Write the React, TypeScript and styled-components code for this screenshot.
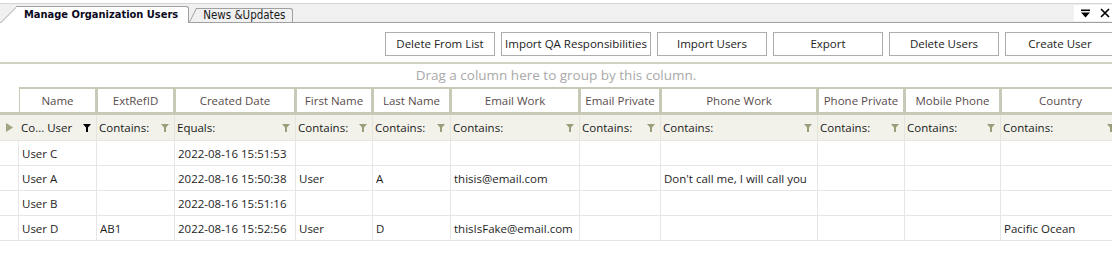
import styled, { createGlobalStyle } from "styled-components";

const GlobalStyle = createGlobalStyle`
  html, body {
    margin: 0;
    padding: 0;
    background: #fff;
  }
  body {
    font-family: "Open Sans", "Noto Sans", sans-serif;
    overflow: hidden;
  }
`;

const GRID = "19px 78px 78px 121px 77px 78px 129px 81px 157px 87px 96px 120px";

type Column = { title: string; filter: string; active?: boolean };

const columns: Column[] = [
  { title: "Name", filter: "Co... User", active: true },
  { title: "ExtRefID", filter: "Contains:" },
  { title: "Created Date", filter: "Equals:" },
  { title: "First Name", filter: "Contains:" },
  { title: "Last Name", filter: "Contains:" },
  { title: "Email Work", filter: "Contains:" },
  { title: "Email Private", filter: "Contains:" },
  { title: "Phone Work", filter: "Contains:" },
  { title: "Phone Private", filter: "Contains:" },
  { title: "Mobile Phone", filter: "Contains:" },
  { title: "Country", filter: "Contains:" },
];

const rows: string[][] = [
  ["User C", "", "2022-08-16 15:51:53", "", "", "", "", "", "", "", ""],
  ["User A", "", "2022-08-16 15:50:38", "User", "A", "thisis@email.com", "", "Don't call me, I will call you", "", "", ""],
  ["User B", "", "2022-08-16 15:51:16", "", "", "", "", "", "", "", ""],
  ["User D", "AB1", "2022-08-16 15:52:56", "User", "D", "thisIsFake@email.com", "", "", "", "", "Pacific Ocean"],
];

const buttons = [
  { label: "Delete From List", w: 110 },
  { label: "Import QA Responsibilities", w: 150 },
  { label: "Import Users", w: 110 },
  { label: "Export", w: 110 },
  { label: "Delete Users", w: 110 },
  { label: "Create User", w: 110 },
];

export default function App() {
  return (
    <Page>
      <GlobalStyle />
      <TabStrip>
        <Tab $active>Manage Organization Users</Tab>
        <Tab>News &amp;Updates</Tab>
        <WindowControls>
          <svg width="9" height="9" viewBox="0 0 9 9">
            <rect x="0" y="0.5" width="9" height="1.6" fill="#000" />
            <polygon points="0,3.5 9,3.5 4.5,8.5" fill="#000" />
          </svg>
          <svg width="10" height="10" viewBox="0 0 10 10">
            <path d="M1 1 L9 9 M9 1 L1 9" stroke="#000" strokeWidth="1.7" />
          </svg>
        </WindowControls>
      </TabStrip>

      <Toolbar>
        {buttons.map((b) => (
          <Button key={b.label} $w={b.w}>
            {b.label}
          </Button>
        ))}
      </Toolbar>

      <GroupPanel>Drag a column here to group by this column.</GroupPanel>

      <Grid>
        <HeaderRow>
          <CornerCell />
          {columns.map((c) => (
            <HeaderCell key={c.title}>{c.title}</HeaderCell>
          ))}
        </HeaderRow>

        <FilterRow>
          <FilterIndicator>
            <svg width="7" height="9" viewBox="0 0 7 9">
              <polygon points="0,0 7,4.5 0,9" fill="#a3a383" />
            </svg>
          </FilterIndicator>
          {columns.map((c) => (
            <FilterCell key={c.title}>
              <span>{c.filter}</span>
              <FunnelIcon color={c.active ? "#000" : "#9d9d7b"} />
            </FilterCell>
          ))}
        </FilterRow>

        {rows.map((r, i) => (
          <DataRow key={i}>
            <DataCell />
            {r.map((v, j) => (
              <DataCell key={j}>{v}</DataCell>
            ))}
          </DataRow>
        ))}
      </Grid>
    </Page>
  );
}

function FunnelIcon({ color }: { color: string }) {
  return (
    <svg width="8" height="8" viewBox="0 0 8 8">
      <polygon points="0,0 8,0 5,3.5 5,8 3,8 3,3.5" fill={color} />
    </svg>
  );
}

const Page = styled.div`
  width: 1112px;
  height: 254px;
  overflow: hidden;
  background: #fff;
`;

const TabStrip = styled.div`
  position: relative;
  z-index: 0;
  box-sizing: border-box;
  display: flex;
  align-items: flex-end;
  height: 20px;
  margin-top: 3px;
  background: #f0f0f0;
  border-top: 1px solid #d6d6d6;
  border-bottom: 1px solid #a0a0a0;
`;

const Tab = styled.div<{ $active?: boolean }>`
  position: relative;
  box-sizing: border-box;
  height: ${({ $active }) => ($active ? 17 : 14)}px;
  margin-left: ${({ $active }) => ($active ? 16 : 8)}px;
  margin-bottom: ${({ $active }) => ($active ? -1 : 0)}px;
  padding: 0 ${({ $active }) => ($active ? 10 : 7)}px 0 ${({ $active }) => ($active ? 8 : 6)}px;
  background: ${({ $active }) => ($active ? "#fff" : "#f0f0f0")};
  border-top: 1px solid #a0a0a0;
  border-right: 1px solid #a0a0a0;
  border-top-right-radius: 3px;
  color: ${({ $active }) => ($active ? "#0a0a1e" : "#1a1a1a")};
  font-family: "DejaVu Sans Condensed", "DejaVu Sans", sans-serif;
  font-size: ${({ $active }) => ($active ? 11 : 11.5)}px;
  font-weight: ${({ $active }) => ($active ? "bold" : "normal")};
  line-height: ${({ $active }) => ($active ? 15 : 13)}px;
  white-space: nowrap;

  &::before {
    content: "";
    position: absolute;
    top: -1px;
    bottom: 0;
    left: ${({ $active }) => ($active ? -16 : -8)}px;
    width: 20px;
    background: inherit;
    border-top: 1px solid #a0a0a0;
    border-left: 1px solid #a0a0a0;
    transform-origin: bottom left;
    transform: skewX(${({ $active }) => ($active ? -45 : -27)}deg);
    z-index: -1;
  }
`;

const WindowControls = styled.div`
  align-self: flex-start;
  display: flex;
  align-items: center;
  gap: 10px;
  height: 16px;
  margin: 1px 0 0 auto;
  padding: 0 2px 0 7px;
  background: #fff;
`;

const Toolbar = styled.div`
  display: flex;
  justify-content: flex-end;
  gap: 6px;
  padding: 9px 0 6px;
  margin-right: -3px;
`;

const Button = styled.div<{ $w: number }>`
  box-sizing: border-box;
  flex: none;
  width: ${({ $w }) => $w}px;
  height: 24px;
  border: 1px solid #adadad;
  background: #fff;
  color: #222;
  font-size: 11.5px;
  line-height: 22px;
  text-align: center;
  white-space: nowrap;
`;

const GroupPanel = styled.div`
  height: 23px;
  border-top: 2px solid #d2d2c4;
  color: #a9a9a9;
  font-size: 13.5px;
  line-height: 23px;
  text-align: center;
`;

const Grid = styled.div`
  display: flex;
  flex-direction: column;
`;

const HeaderRow = styled.div`
  display: grid;
  grid-template-columns: ${GRID};
  height: 28px;
`;

const CornerCell = styled.div`
  border-bottom: 3px solid #c9c9b8;
`;

const HeaderCell = styled.div`
  box-sizing: border-box;
  border-top: 2px solid #c9c9b8;
  border-left: 1px solid #c9c9b8;
  border-right: 2px solid #c9c9b8;
  border-bottom: 3px solid #c9c9b8;
  background: #fff;
  color: #594c4c;
  font-size: 11.5px;
  line-height: 23px;
  text-align: center;
  white-space: nowrap;
  overflow: hidden;
`;

const FilterRow = styled.div`
  display: grid;
  grid-template-columns: ${GRID};
  height: 26px;
  box-sizing: border-box;
  background: #f2f2ea;
  border-bottom: 1px solid #e6e6de;
`;

const FilterIndicator = styled.div`
  display: flex;
  align-items: center;
  padding-left: 6px;
`;

const FilterCell = styled.div`
  display: flex;
  align-items: center;
  justify-content: space-between;
  padding: 0 5px 0 2px;
  border-right: 1px solid #e4e4da;
  color: #1a1a1a;
  font-size: 11.5px;
  white-space: nowrap;
  overflow: hidden;
`;

const DataRow = styled.div`
  display: grid;
  grid-template-columns: ${GRID};
  height: 25px;
  box-sizing: border-box;
  border-bottom: 1px solid #e6e6e6;
`;

const DataCell = styled.div`
  display: flex;
  align-items: center;
  padding-left: 3px;
  border-right: 1px solid #e6e6e6;
  color: #1e1e1e;
  font-size: 11.5px;
  white-space: nowrap;
  overflow: hidden;
`;
